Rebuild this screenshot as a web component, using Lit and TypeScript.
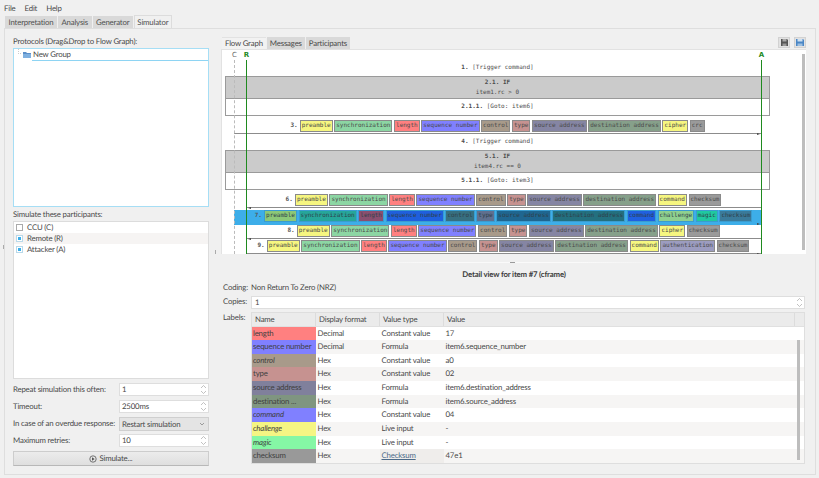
import { LitElement, html, css, svg } from "lit";
import { customElement } from "lit/decorators.js";

type Chip = [string, string];
const C: Record<string, string> = {
  preamble: "y", synchronization: "g", length: "r", "sequence number": "b", control: "t", type: "p",
  "source address": "s", "destination address": "d", cipher: "y", crc: "k", command: "y", checksum: "k",
  authentication: "a", challenge: "h", magic: "m",
};
const item = (names: string[]) => names.map((n): Chip => [n, C[n]]);
const base = ["preamble", "synchronization", "length", "sequence number", "control", "type", "source address", "destination address"];

const labels = [
  ["length", "Decimal", "Constant value", "17", "#ff8080", false],
  ["sequence number", "Decimal", "Formula", "item6.sequence_number", "#8080ff", false],
  ["control", "Hex", "Constant value", "a0", "#a89a8a", true],
  ["type", "Hex", "Constant value", "02", "#c69290", false],
  ["source address", "Hex", "Formula", "item6.destination_address", "#80809c", false],
  ["destination ...", "Hex", "Formula", "item6.source_address", "#7f9580", false],
  ["command", "Hex", "Constant value", "04", "#8080ff", true],
  ["challenge", "Hex", "Live input", "-", "#f5f583", true],
  ["magic", "Hex", "Live input", "-", "#85f7a5", true],
  ["checksum", "Hex", "Checksum", "47e1", "#999999", false],
] as const;

const updown = svg`<svg class="updown" width="7" height="11" viewBox="0 0 7 11" fill="none" stroke="#a8a8a8" stroke-width="0.7"><path d="M1 4l2.5-2.5L6 4M1 7l2.5 2.5L6 7"/></svg>`;

@customElement("app-root")
export class AppRoot extends LitElement {
  static styles = css`
    :host { display: block; width: 819px; height: 478px; overflow: hidden; position: relative; background: #f0f0f0; color: #484848; font: 7.8px/11px Lato, sans-serif; letter-spacing: -0.17px; text-rendering: geometricPrecision; white-space: nowrap; }
    .menu { display: flex; gap: 9px; height: 16px; padding-left: 4px; align-items: center; }
    .tabs { display: flex; height: 12px; padding-left: 5px; gap: 1px; }
    .tab { padding: 0 3.5px; background: #d9d9d9; line-height: 13px; color: #4f4f4f; white-space: nowrap; }
    .tab.on { background: #f0f0f0; border: 1px solid #dcdcdc; border-bottom: 0; margin-top: -1px; padding: 0 2.5px; line-height: 13px; height: 12px; position: relative; z-index: 1; }
    .panel { display: flex; margin-left: 4px; width: 812px; height: 447px; box-sizing: border-box; border: 1px solid #dedede; position: relative; }
    .left { width: 196px; margin-left: 8px; padding-top: 6px; display: flex; flex-direction: column; flex: none; }
    .cap { height: 13px; line-height: 12px; flex: none; }
    .cap.two { height: 14px; line-height: 14px; }
    .tree { height: 159px; box-sizing: border-box; border: 1px solid #a6def5; background: #fff; flex: none; position: relative; }
    .tree-row { display: flex; align-items: center; height: 11px; padding-left: 4px; gap: 2px; }
    .twig { width: 3px; height: 5px; border-left: 1px dotted #ccc; border-bottom: 1px dotted #ccc; margin-top: -6px; box-sizing: border-box; }
    .drop { height: 1px; background: #8ed4f3; margin-left: 18px; }
    .list { height: 158px; box-sizing: border-box; border: 1px solid #dcdcdc; background: #fff; flex: none; }
    .part { height: 11px; display: flex; align-items: center; gap: 4px; padding-left: 2px; }
    .part.alt { background: #f6f4f3; }
    .box { width: 7px; height: 7px; box-sizing: border-box; border: 1px solid #aaa; background: #fff; padding: 1px; }
    .box.on { border-color: #b9d9ea; }
    .box.on i { display: block; width: 3px; height: 3px; background: #3daee9; }
    .form { display: grid; grid-template-columns: 106px 90px; row-gap: 4px; margin-top: 4px; align-items: center; }
    .spin { height: 13px; box-sizing: border-box; border: 1px solid #dedede; background: #fff; display: flex; align-items: center; justify-content: space-between; padding: 0 1px 0 2px; }
    .combo { height: 14px; box-sizing: border-box; border: 1px solid #cfcfcf; background: #e4e4e4; display: flex; align-items: center; justify-content: space-between; padding: 0 3px 0 2px; margin-bottom: -1px; }
    .btn { height: 15px; margin-top: 4px; box-sizing: border-box; border: 1px solid #cdcdcd; border-bottom-color: #b8b8b8; background: linear-gradient(#ececec, #dfdfdf); display: flex; align-items: center; justify-content: center; gap: 2px; }
    .right { width: 584px; margin-left: 13px; padding-top: 8px; flex: none; display: flex; flex-direction: column; }
    .subtabs { display: flex; height: 12px; gap: 1px; align-items: stretch; }
    .stab { padding: 0 3px; background: #d9d9d9; line-height: 12px; }
    .stab.on { background: #f2f2f2; border-top: 1px solid #e2e2e2; line-height: 11px; }
    .tools { margin-left: auto; display: flex; gap: 4px; }
    .tool { width: 12px; height: 11px; background: #e2e2e2; border: 1px solid #d2d2d2; box-sizing: border-box; display: flex; align-items: center; justify-content: center; }
    .graph { height: 205px; background: #fff; position: relative; overflow: hidden; box-sizing: border-box; box-shadow: -1px 0 0 #e2e2e2; border-top: 1px solid #e2e2e2; font: 6px/10px "DejaVu Sans Mono", monospace; letter-spacing: 0; color: #4c4c4c; }
    .heads { height: 10px; }
    .life { position: absolute; top: 10px; bottom: 0; width: 1px; z-index: 2; }
    .life.g { background: #1f8a1f; }
    .life.c { border-left: 1px dashed #bbb; width: 0; }
    .who { position: absolute; top: 0; font: bold 7px/10px "DejaVu Sans", sans-serif; transform: translateX(-50%); z-index: 2; }
    .who.g { color: #1f8a1f; background: none; }
    .who.c { color: #666; font-weight: normal; }
    .note { display: flex; justify-content: center; align-items: center; margin: 0 45px 0 12px; white-space: pre; }
    b { font-weight: bold; }
    .n16 { height: 16px; }
    .n16.tall { height: 16.5px; }
    .if { margin: 0 36px 0 3px; border: 1px solid #9a9a9a; box-sizing: border-box; height: 39.5px; display: flex; flex-direction: column; }
    .if.tall { height: 40px; }
    .if-top { height: 22px; box-sizing: border-box; background: #cbcbcb; border-bottom: 1px solid #9a9a9a; text-align: center; padding: 1px 33px 0 0; flex: none; }
    .if-top div { height: 10px; padding-left: 33px; }
    .if-bot { display: flex; flex: 1; align-items: center; justify-content: center; white-space: pre; padding-left: 0; }
    .msg { display: flex; justify-content: center; align-items: flex-end; gap: 1.6px; padding-bottom: 1px; position: relative; white-space: pre; box-sizing: border-box; margin-right: 45px; border-bottom: 1px solid #8c8c8c; }
    .msg.fc { margin-left: 12px; }
    .msg.fr { margin-left: 24px; }
    .msg.sel { margin-left: 12px; padding: 0 0 3px 12px; background: #3daee9; border-bottom: 0; color: #333; }
    .num { margin-right: 0.5px; font-weight: bold; color: #555; align-self: flex-end; line-height: 12px; }
    .chip { height: 12px; line-height: 10px; box-sizing: border-box; border: 1px solid #8a8a8a; padding: 0 1px; color: #4a4a4a; }
    .y { background: #f6f680; } .g { background: #8cd6a3; } .r { background: #ff8080; } .b { background: #8080ff; }
    .t { background: #a89a8a; } .p { background: #c69290; } .s { background: #8585a3; } .d { background: #86a08a; }
    .k { background: #9a9a9a; } .a { background: #9c9cc0; }
    .sel .chip { border-color: #3a9ccf; color: #2f3f4a; }
    .sel .y { background: #8cc878; } .sel .g { background: #26a69a; } .sel .r { background: #8a4f70; } .sel .b { background: #1f5fdd; }
    .sel .t { background: #376f80; } .sel .p { background: #60708f; } .sel .s { background: #1f6690; } .sel .d { background: #23707f; }
    .sel .k { background: #3a7a9a; } .sel .h { background: #8fd08f; } .sel .m { background: #20c8a0; }
    .sel .cmd { background: #2060e0; }
    .arrow { position: absolute; bottom: -2px; width: 0; height: 0; border-top: 1.5px solid transparent; border-bottom: 1.5px solid transparent; }
    .arrow.rt { right: 1px; border-left: 3px solid #444; }
    .arrow.lt { left: 2px; border-right: 3px solid #444; }
    .sel .arrow { bottom: 0; right: 1px; }
    .spacer { height: 2px; }
    .vbar { position: absolute; right: 1px; top: 4px; bottom: 4px; width: 3px; background: #bdbdbd; z-index: 3; }
    .split { height: 1px; margin: 8px 0 0 118px; width: 340px; background: linear-gradient(90deg, #f0f0f0, #fafafa 30%, #fafafa 70%, #f0f0f0); position: relative; flex: none; }
    .dots { position: absolute; left: 170px; top: 0; width: 5px; height: 1px; background: #9a9a9a; }
    .title { font-weight: bold; text-align: center; height: 11px; margin-top: 6px; line-height: 11px; flex: none; color: #3d3d3d; }
    .detail { display: grid; grid-template-columns: 28px 554px; row-gap: 3px; padding-left: 1px; margin-top: 2px; }
    .detail > .lb { line-height: 11px; }
    .copies { height: 13px; box-sizing: border-box; border: 1px solid #dedede; background: #fff; display: flex; align-items: center; justify-content: space-between; padding: 0 1px 0 3px; }
    .table { height: 152px; box-sizing: border-box; border: 1px solid #dedede; background: #fff; position: relative; }
    .tr { display: grid; grid-template-columns: 64px 64px 64px 351px; height: 13.66px; line-height: 13.66px; }
    .th { height: 13.5px; background: #ebebeb; border-bottom: 1px solid #e0e0e0; box-sizing: border-box; line-height: 13px; }
    .th span { padding-left: 3px; border-right: 1px solid #dcdcdc; white-space: nowrap; }
    .td { padding-left: 1.5px; white-space: nowrap; overflow: hidden; }
    .name { padding-left: 1px; color: #3f3f3f; }
    .it { font-style: italic; }
    .alt2 { background: #f6f5f4; }
    .link { color: #4b6a88; text-decoration: underline; background: #efedeb; }
    .tbar { position: absolute; right: 4px; top: 27px; width: 3px; height: 120px; background: #bdbdbd; }
    .grip { position: absolute; width: 1px; height: 4px; background: #aaa; }
    .grip.a { left: -2px; top: 216px; }
    .grip.b { left: 210px; top: 221px; }
  `;

  chip([n, k]: Chip) {
    return html`<span class="chip ${k} ${n === "command" ? "cmd" : ""}">${n}</span>`;
  }

  spin(v: string) {
    return html`<div class="spin"><span>${v}</span>${updown}</div>`;
  }

  msg(no: string, names: string[], from: string, dir: string, h: number, selected = false) {
    return html`<div class="msg ${from} ${selected ? "sel" : ""}" style="height:${h}px">
      <span class="num">${no}</span>${item(names).map((c) => this.chip(c))}
      <span class="arrow ${dir}"></span>
    </div>`;
  }

  render() {
    return html`
      <div class="menu"><span>File</span><span>Edit</span><span>Help</span></div>
      <div class="tabs">
        <span class="tab">Interpretation</span><span class="tab">Analysis</span><span class="tab">Generator</span><span class="tab on">Simulator</span>
      </div>
      <div class="panel">
        <div class="left">
          <div class="cap">Protocols (Drag&amp;Drop to Flow Graph):</div>
          <div class="tree">
            <div class="tree-row">
              <span class="twig"></span>
              <svg width="8" height="7" viewBox="0 0 8 7"><path d="M0 1h3l1 1h4v5H0z" fill="#5b8fc9"/><path d="M0 3h8v4H0z" fill="#7fb0e0"/></svg>
              <span>New Group</span>
            </div>
            <div class="drop"></div>
          </div>
          <div class="cap two">Simulate these participants:</div>
          <div class="list">
            <div class="part"><span class="box"></span>CCU (C)</div>
            <div class="part alt"><span class="box on"><i></i></span>Remote (R)</div>
            <div class="part"><span class="box on"><i></i></span>Attacker (A)</div>
          </div>
          <div class="form">
            <span>Repeat simulation this often:</span>${this.spin("1")}
            <span>Timeout:</span>${this.spin("2500ms")}
            <span>In case of an overdue response:</span>
            <div class="combo"><span>Restart simulation</span><svg width="6" height="4" viewBox="0 0 6 4" fill="none" stroke="#888" stroke-width="0.8"><path d="M1 1l2 2 2-2"/></svg></div>
            <span>Maximum retries:</span>${this.spin("10")}
          </div>
          <div class="btn">
            <svg width="8" height="8" viewBox="0 0 8 8"><circle cx="4" cy="4" r="3.2" fill="none" stroke="#555" stroke-width="0.8"/><path d="M3 2.3L5.6 4 3 5.7z" fill="#555"/></svg>
            <span>Simulate...</span>
          </div>
        </div>
        <div class="right">
          <div class="subtabs">
            <span class="stab on">Flow Graph</span><span class="stab">Messages</span><span class="stab">Participants</span>
            <div class="tools">
              <span class="tool"><svg width="7" height="7" viewBox="0 0 7 7"><path d="M0 0h6l1 1v6H0z" fill="#555"/><path d="M1.5 0h4v2.5h-4z" fill="#aaa"/><path d="M1.5 4.5h4V7h-4z" fill="#999"/></svg></span>
              <span class="tool"><svg width="8" height="7" viewBox="0 0 8 7"><path d="M0 0h7l1 1v6H0z" fill="#4a86c5"/><path d="M1.5 0h5v2.5h-5z" fill="#cfe0f0"/><path d="M1.5 4.5h5V7h-5z" fill="#9dbfe0"/></svg></span>
            </div>
          </div>
          <div class="graph">
            <div class="heads"></div>
            <span class="who c" style="left:12.5px">C</span><span class="who g" style="left:24.5px">R</span><span class="who g" style="left:539.5px">A</span>
            <span class="life c" style="left:12px"></span><span class="life g" style="left:24px"></span><span class="life g" style="left:539px"></span>
            <span class="vbar"></span>
            <div class="note n16"><b>1. </b>[Trigger command]</div>
            <div class="if">
              <div class="if-top"><div><b>2.1. IF</b></div><div>item1.rc &gt; 0</div></div>
              <div class="if-bot"><b>2.1.1. </b>[Goto: item6]</div>
            </div>
            ${this.msg("3.", [...base, "cipher", "crc"], "fc", "rt", 18)}
            <div class="note n16 tall"><b>4. </b>[Trigger command]</div>
            <div class="if tall">
              <div class="if-top"><div><b>5.1. IF</b></div><div>item4.rc == 0</div></div>
              <div class="if-bot"><b>5.1.1. </b>[Goto: item3]</div>
            </div>
            ${this.msg("6.", [...base, "command", "checksum"], "fr", "lt", 18)}
            <div class="spacer"></div>
            ${this.msg("7.", [...base, "command", "challenge", "magic", "checksum"], "", "rt", 15, true)}
            ${this.msg("8.", [...base, "cipher", "checksum"], "fr", "lt", 13.5)}
            ${this.msg("9.", [...base, "command", "authentication", "checksum"], "fr", "rt", 15)}
          </div>
          <div class="split"><span class="dots"></span></div>
          <div class="title">Detail view for item #7 (cframe)</div>
          <div class="detail">
            <span class="lb">Coding:</span><span>Non Return To Zero (NRZ)</span>
            <span class="lb">Copies:</span>
            <div class="copies"><span>1</span>${updown}</div>
            <span class="lb">Labels:</span>
            <div class="table">
              <div class="tr th"><span>Name</span><span>Display format</span><span>Value type</span><span>Value</span></div>
              ${labels.map((l, i) => html`
                <div class="tr ${i % 2 ? "alt2" : ""}">
                  <span class="td name ${l[5] ? "it" : ""}" style="background:${l[4]}">${l[0]}</span>
                  <span class="td">${l[1]}</span>
                  <span class="td ${l[0] === "checksum" ? "link" : ""}">${l[2]}</span>
                  <span class="td">${l[3]}</span>
                </div>`)}
              <span class="tbar"></span>
            </div>
          </div>
        </div>
        <span class="grip a"></span>
        <span class="grip b"></span>
      </div>
    `;
  }
}
